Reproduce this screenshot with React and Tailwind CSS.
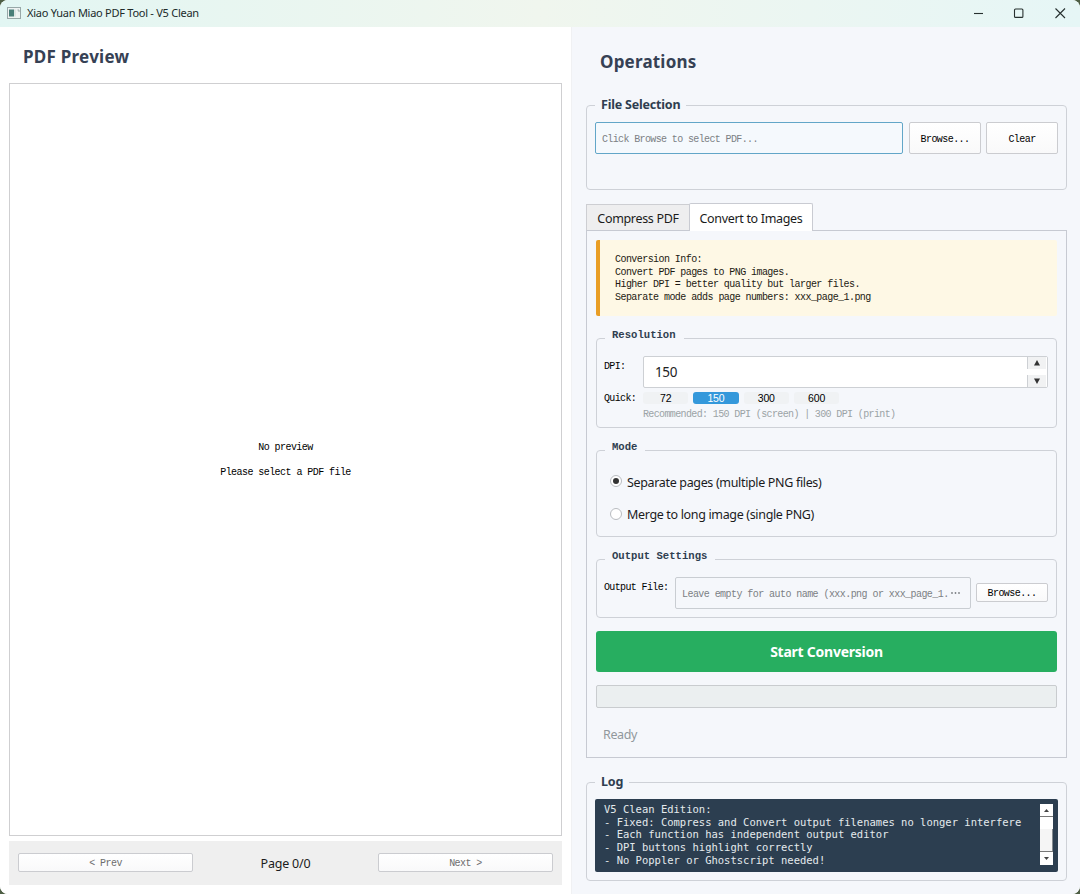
import { useState } from 'react'
import clsx from 'clsx'

const LOG_LINES = [
  'V5 Clean Edition:',
  '- Fixed: Compress and Convert output filenames no longer interfere',
  '- Each function has independent output editor',
  '- DPI buttons highlight correctly',
  '- No Poppler or Ghostscript needed!',
];

const MODES = [
  { id: 'separate', label: 'Separate pages (multiple PNG files)' },
  { id: 'merge', label: 'Merge to long image (single PNG)' },
];

const mono = "font-['Liberation_Mono',monospace] text-[10px] tracking-[-0.56px] whitespace-pre";
const monoTight = "font-['Liberation_Mono',monospace] text-[10px] tracking-[-0.63px] whitespace-pre";
const button = 'rounded-[2px] border border-[#cbccd0] bg-gradient-to-b from-white to-[#f9f9fa] pt-[2px]';

const TitleBar = () => (
  <header className="flex h-[27px] shrink-0 items-center bg-gradient-to-r from-[#e2f6f3] via-[#f0f6ee] to-[#e6f6f6] pb-[2px] pl-[7px]">
    <svg width="14" height="12" viewBox="0 0 14 12" className="mr-[6px]">
      <rect x="0.5" y="0.5" width="13" height="11" fill="#eef3f2" stroke="#98a8a8" />
      <rect x="2" y="2.5" width="5" height="7" fill="#497e78" />
      <path d="M8 2.5v7" stroke="#cbd5d4" />
      <path d="M10.5 3h1.5v2" stroke="#9aa" fill="none" />
    </svg>
    <span className="text-[11px] leading-4 tracking-[-0.26px] text-[#202a2a]">Xiao Yuan Miao PDF Tool - V5 Clean</span>
    <svg width="100" height="12" viewBox="0 0 100 12" fill="none" stroke="#27302f" strokeWidth="1.1" className="mr-[9px] ml-auto">
      <path d="M3 6.5h9" />
      <rect x="43.5" y="2" width="8.4" height="8.4" rx="1" />
      <path d="M84.5 1.5l9.5 9.5M94 1.5l-9.5 9.5" />
    </svg>
  </header>
);

const Preview = () => (
  <section className="flex w-[572px] shrink-0 flex-col border-r border-[#f0f1f3] bg-white pr-[9px] pb-[9px] pl-[9px]">
    <h1 className="flex h-14 items-center pt-[3px] pl-[14px] text-[17px] font-bold tracking-[0.25px] text-[#364154]">PDF Preview</h1>
    <div className={clsx(mono, 'flex h-[753px] flex-col items-center justify-center gap-[11px] border border-[#cfcfd1] pt-[2px] leading-[14px] text-black')}>
      <p>No preview</p>
      <p>Please select a PDF file</p>
    </div>
    <div className="mt-[5px] flex h-11 items-center justify-between bg-[#efefef] px-[9px] pb-px">
      <button className={clsx(mono, button, 'h-[19px] w-[175px] text-[#6d6d6d]')}>&lt; Prev</button>
      <span className="pt-[3px] text-[12.5px] tracking-[-0.2px] text-[#1b1b1b]">Page 0/0</span>
      <button className={clsx(mono, button, 'h-[19px] w-[175px] text-[#6d6d6d]')}>Next &gt;</button>
    </div>
    <div className="sr-only" />
  </section>
);

// The legend breaks the top border of the box, like a Qt group box
const GroupBox = ({ title, small, className, children }) => (
  <fieldset className={clsx('min-w-0 rounded-[4px] border border-[#ced1d7] pr-2', small ? 'pl-[7px]' : 'pl-2', className)}>
    <legend
      className={clsx(
        'h-[18px] font-bold whitespace-pre text-[#2f3e50]',
        small
          ? "ml-px pt-px pr-2 pl-[7px] font-['Liberation_Mono',monospace] text-[10.6px] leading-[11px]"
          : 'px-[6px] text-[12.5px] leading-[17px] tracking-[-0.2px]'
      )}
    >
      {title}
    </legend>
    {children}
  </fieldset>
);

const DpiField = () => (
  <div className="flex h-8 w-[405px] overflow-hidden rounded-[2px] border border-[#cdd0d4] bg-white">
    <input className="min-w-0 flex-1 pl-[11px] text-[13.5px] tracking-[-0.4px] text-[#222] outline-none" defaultValue="150" />
    <div className="flex w-5 flex-col justify-between bg-white pr-px">
      <button className="flex h-3 items-center justify-center border-l border-[#cdd0d4] bg-[#f1f2f3]">
        <svg width="6" height="6" viewBox="0 0 6 6" fill="#333"><path d="M3 0l3 5.5H0z" /></svg>
      </button>
      <button className="flex h-3 items-center justify-center border-l border-[#cdd0d4] bg-[#f1f2f3]">
        <svg width="6" height="6" viewBox="0 0 6 6" fill="#333"><path d="M3 6l3-5.5H0z" /></svg>
      </button>
    </div>
  </div>
);

const ConvertTab = () => {
  const [dpi, setDpi] = useState(150);
  const [mode, setMode] = useState('separate');

  return (
    <div className="h-[528px] border border-[#c7cad2] px-[9px] pt-[9px]">
      <div className={clsx(mono, 'h-[76px] rounded-[2px] border-l-4 border-[#e99e25] bg-[#fef8e5] pt-[14px] pl-[15px] leading-[12.7px] text-[#1d1a12]')}>
        <p>Conversion Info:</p>
        <p>Convert PDF pages to PNG images.</p>
        <p>Higher DPI = better quality but larger files.</p>
        <p>Separate mode adds page numbers: xxx_page_1.png</p>
      </div>

      <GroupBox title="Resolution" small className="mt-[13px] h-[99px]">
        <div className="flex pt-[9px]">
          <div className="w-[39px] shrink-0">
            <p className={clsx(monoTight, 'pt-[4px] leading-[14px] text-black')}>DPI:</p>
          </div>
          <DpiField />
        </div>
        <div className="mt-[4px] flex h-3 items-center">
          <span className={clsx(monoTight, 'w-[39px] text-black')}>Quick:</span>
          <div className="flex gap-[5px]">
            {[72, 150, 300, 600].map((value) => (
              <button
                key={value}
                onClick={() => setDpi(value)}
                className={clsx(
                  "h-3 w-[45.3px] rounded-[3px] font-['Liberation_Sans',sans-serif] text-[10.5px] leading-3 tracking-[-0.15px]",
                  dpi === value ? 'bg-[#3498db] text-white' : 'bg-[#f0f2f4] text-black'
                )}
              >
                {value}
              </button>
            ))}
          </div>
        </div>
        <p className={clsx(monoTight, 'mt-[4px] pl-[39px] leading-[14px] text-[#9ba3a6]')}>Recommended: 150 DPI (screen) | 300 DPI (print)</p>
      </GroupBox>

      <GroupBox title="Mode" small className="mt-[13px] h-[96px]">
        <div className="flex flex-col gap-[14px] pt-[13px] pl-[6px]">
          {MODES.map(({ id, label }) => (
            <label key={id} className="flex h-[18.5px] items-center gap-[5px] text-[12.5px] tracking-[-0.34px] whitespace-nowrap text-[#1b1b1d]">
              <input type="radio" name="mode" className="sr-only" checked={mode === id} onChange={() => setMode(id)} />
              <span className="flex size-3 items-center justify-center rounded-full border border-[#b9bcc0] bg-white">
                {mode === id && <span className="size-[6px] rounded-full bg-[#333]" />}
              </span>
              <span className="pt-[4px]">{label}</span>
            </label>
          ))}
        </div>
      </GroupBox>

      <GroupBox title="Output Settings" small className="mt-[13px] h-[68px]">
        <div className="flex pt-[9px]">
          <p className={clsx(monoTight, 'w-[71px] shrink-0 pt-[4px] leading-[14px] text-black')}>Output File:</p>
          <div className={clsx(mono, 'flex h-8 w-[296px] shrink-0 items-center rounded-[2px] border border-[#c9cdd2] pt-[2px] pl-[6px] text-[#7c7f84]')}>
            Leave empty for auto name (xxx.png or xxx_page_1.
            <svg width="11" height="4" viewBox="0 0 11 4" fill="#7c7f84" className="mb-[3px] ml-px">
              <circle cx="2" cy="2" r="0.9" />
              <circle cx="5.5" cy="2" r="0.9" />
              <circle cx="9" cy="2" r="0.9" />
            </svg>
          </div>
          <button className={clsx(mono, button, 'mt-[6px] ml-[5px] h-[19px] w-[73px] text-black')}>Browse...</button>
        </div>
      </GroupBox>

      <button className="mt-[13px] h-[41px] w-full rounded-[3px] bg-[#27ae60] pb-px text-[14px] font-bold tracking-[-0.25px] text-white">Start Conversion</button>
      <div className="mt-[13px] h-[23px] rounded-[2px] border border-[#c9cccf] bg-[#ebeff0]" />
      <p className="mt-[18px] pl-[7px] text-[12.5px] leading-[18px] tracking-[-0.4px] text-[#91989c]">Ready</p>
    </div>
  );
};

const LogBox = () => (
  <GroupBox title="Log" className="mt-[15px] h-[108px]">
    <div className="mt-[8px] flex h-[73px] justify-between rounded-[2px] bg-[#2c3e50] py-[5px] pr-[5px] pl-[9px]">
      <div className="-mt-px font-['DejaVu_Sans_Mono',monospace] text-[10.5px] leading-[12.7px] whitespace-pre text-[#e4eaed]">
        {LOG_LINES.map((line) => (
          <p key={line}>{line}</p>
        ))}
      </div>
      <div className="flex h-[61px] w-[13px] flex-col bg-[#f5f5f5]">
        <div className="flex h-[13px] items-center justify-center border-b border-[#777] bg-white">
          <svg width="5" height="3" viewBox="0 0 5 3" fill="#444"><path d="M2.5 0L5 3H0z" /></svg>
        </div>
        <div className="h-3 bg-white" />
        <div className="flex-1 border-r border-[#858b90]" />
        <div className="flex h-[14px] items-center justify-center border-t border-[#777] bg-white">
          <svg width="5" height="3" viewBox="0 0 5 3" fill="#444"><path d="M2.5 3L5 0H0z" /></svg>
        </div>
      </div>
    </div>
  </GroupBox>
);

const Operations = () => (
  <section className="min-w-0 flex-1 bg-[#f5f7fb] pr-[13px] pl-[14px]">
    <h1 className="flex h-[69px] items-center pl-[14px] text-[17px] font-bold tracking-[0.2px] text-[#364154]">Operations</h1>

    <GroupBox title="File Selection" className="h-[94px]">
      <div className="flex pt-2">
        <div className={clsx(monoTight, 'flex h-8 w-[308px] shrink-0 items-center rounded-[2px] border border-[#62a6c8] bg-[#f5f9fd] pt-[2px] pl-[6px] text-[#7c8084]')}>
          Click Browse to select PDF...
        </div>
        <button className={clsx(mono, button, 'ml-[6px] h-8 w-[72px] text-black')}>Browse...</button>
        <button className={clsx(mono, button, 'ml-[5px] h-8 w-[72px] text-black')}>Clear</button>
      </div>
    </GroupBox>

    <div className="relative z-10 mt-[13px] -mb-px flex h-7 items-end text-[12.5px] text-[#1b1b1b]">
      <button className="mb-px h-[26px] w-[104px] border border-b-0 border-[#cdced2] bg-[#eeeeef] pt-[3px] tracking-[-0.32px]">Compress PDF</button>
      <button className="-ml-px h-7 w-[124px] rounded-t-[2px] border border-b-0 border-[#c9cbd2] bg-white pt-[3px] tracking-[-0.33px]">Convert to Images</button>
    </div>
    <ConvertTab />
    <LogBox />
  </section>
);

export default function App() {
  return (
    <div className="h-[894px] w-[1080px] bg-[#4e5f45]">
      <div className="flex h-full flex-col overflow-hidden rounded-[8px] bg-white font-['Noto_Sans','Open_Sans',sans-serif]">
        <TitleBar />
        <main className="flex min-h-0 flex-1">
          <Preview />
          <Operations />
        </main>
      </div>
    </div>
  )
}
